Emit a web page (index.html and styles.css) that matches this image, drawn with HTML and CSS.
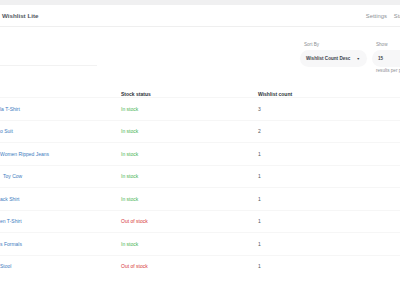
FILE: index.html
```html
<!DOCTYPE html>
<html lang="en">
<head>
    <meta charset="UTF-8">
    <meta name="viewport" content="width=device-width, initial-scale=1.0">
    <title>Wishlist Lite - Stats</title>
    <link rel="stylesheet" href="styles.css">
</head>
<body>
    <div class="page">
        <div class="topband"></div>
        <header class="bar">
            <h1 class="title">Wishlist Lite</h1>
            <nav class="tabs">
                <a href="#">Settings</a>
                <a href="#">Stats</a>
            </nav>
        </header>

        <main class="content">
            <div class="toolbar">
                <input class="search" type="text" aria-label="Search products">
                <div class="filters">
                    <div class="field sort">
                        <span class="field-label">Sort By</span>
                        <div class="select">
                            <span>Wishlist Count Desc</span>
                            <span class="caret">▼</span>
                        </div>
                    </div>
                    <div class="field show">
                        <span class="field-label">Show</span>
                        <div class="select">
                            <span>15</span>
                        </div>
                        <span class="hint">results per page</span>
                    </div>
                </div>
            </div>

            <table class="stats">
                <thead>
                    <tr>
                        <th class="col-name"></th>
                        <th class="col-stock">Stock status</th>
                        <th>Wishlist count</th>
                    </tr>
                </thead>
                <tbody>
                    <tr><td><a href="#">la T-Shirt</a></td><td class="in">In stock</td><td>3</td></tr>
                    <tr><td><a href="#">o Suit</a></td><td class="in">In stock</td><td>2</td></tr>
                    <tr><td><a href="#">Women Ripped Jeans</a></td><td class="in">In stock</td><td>1</td></tr>
                    <tr><td><a href="#" class="indent">Toy Cow</a></td><td class="in">In stock</td><td>1</td></tr>
                    <tr><td><a href="#">ack Shirt</a></td><td class="in">In stock</td><td>1</td></tr>
                    <tr><td><a href="#">en T-Shirt</a></td><td class="out">Out of stock</td><td>1</td></tr>
                    <tr><td><a href="#">s Formals</a></td><td class="in">In stock</td><td>1</td></tr>
                    <tr><td><a href="#">Stool</a></td><td class="out">Out of stock</td><td>1</td></tr>
                </tbody>
            </table>
        </main>
    </div>
</body>
</html>
```

FILE: styles.css
```css
body {
    margin: 0;
    overflow: hidden;
    background-color: #fff;
    font-family: "Liberation Sans", Arial, sans-serif;
    color: #333;
}
.page {
    width: 430px;
}
.topband {
    height: 5px;
    background-color: #f0f0f1;
}
.bar {
    display: flex;
    align-items: center;
    justify-content: space-between;
    height: 21px;
    padding: 0 23px 0 2px;
    border-bottom: 1px solid #efefef;
}
.title {
    margin: 0;
    font-size: 6.2px;
    font-weight: bold;
    color: #50575e;
}
.tabs {
    display: flex;
    gap: 7px;
}
.tabs a {
    font-size: 5.8px;
    color: #8c8f94;
    text-decoration: none;
}
.toolbar {
    display: flex;
    align-items: flex-start;
    padding-top: 15px;
}
.search {
    width: 97px;
    height: 23px;
    margin: 0;
    padding: 0;
    border: none;
    border-bottom: 1px solid #f2f2f2;
    outline: none;
}
.filters {
    display: flex;
    gap: 5px;
    margin-left: auto;
}
.field {
    display: flex;
    flex-direction: column;
}
.field-label {
    padding-left: 4px;
    margin-bottom: 2px;
    font-size: 4.6px;
    line-height: 6px;
    color: #8c8f94;
}
.select {
    display: flex;
    align-items: center;
    justify-content: space-between;
    height: 17px;
    padding: 0 7px 0 6px;
    border-radius: 9px;
    background-color: #f7f7f8;
    font-size: 4.6px;
    font-weight: bold;
    color: #3c434a;
}
.sort {
    width: 67px;
}
.show {
    width: 58px;
}
.caret {
    font-size: 3.5px;
}
.hint {
    margin-top: 1px;
    padding-left: 4px;
    font-size: 4.6px;
    line-height: 6px;
    color: #8c8f94;
    white-space: nowrap;
}
.stats {
    width: 100%;
    margin-top: 13px;
    border-collapse: collapse;
    font-size: 5px;
}
.stats th {
    height: 10px;
    padding: 0;
    vertical-align: bottom;
    text-align: left;
    line-height: 5px;
    font-weight: bold;
    color: #2c3338;
}
.col-name {
    width: 121px;
}
.col-stock {
    width: 137px;
}
.stats td {
    height: 21.5px;
    padding: 0;
    border-top: 1px solid #f6f6f6;
    vertical-align: middle;
    color: #50575e;
}
.stats td a {
    color: #3d7cc0;
    text-decoration: none;
}
.stats td a.indent {
    padding-left: 3px;
}
.stats td.in {
    color: #46b450;
}
.stats td.out {
    color: #d63638;
}
```
